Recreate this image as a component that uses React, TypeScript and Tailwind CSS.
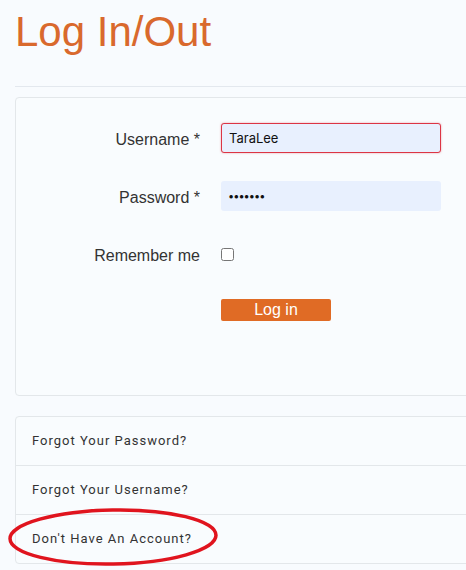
import React from "react";

const links = ["Forgot Your Password?", "Forgot Your Username?", "Don't Have An Account?"];

export default function App() {
  return (
    <div className="relative h-[570px] w-[466px] overflow-hidden bg-[#f8fbfe] font-['Liberation_Sans',Arial,sans-serif]">
      <div className="pl-[15px]">
        <h1 className="pt-[8px] text-[42px] leading-[48px] text-[#d9692d]">Log In/Out</h1>
        <div className="mt-[30px] border-t border-[#e3e8ee]" />

        <div className="mt-[10px] h-[299px] w-[470px] rounded-tl-[4px] rounded-bl-[4px] border border-[#e3e7ea] bg-[#f9fcfe]">
          <div className="flex items-center pt-[25px]">
            <label className="w-[185px] pr-[1px] pt-[4px] text-right text-[16px] text-[#333]">Username *</label>
            <input
              defaultValue="TaraLee"
              className="ml-[20px] h-[30px] w-[220px] rounded-[3px] border border-[#dc3545] bg-[#e8f0fe] px-[7px] font-['Inter',sans-serif] text-[13px] text-[#111] shadow-[0_0_2px_rgba(220,53,69,0.5)] outline-none"
            />
          </div>
          <div className="mt-[28px] flex items-center">
            <label className="w-[185px] pr-[1px] pt-[4px] text-right text-[16px] text-[#333]">Password *</label>
            <input
              type="password"
              defaultValue="abcdefg"
              className="ml-[20px] h-[30px] w-[220px] rounded-[3px] bg-[#e8f0fe] px-[7px] font-['Inter',sans-serif] text-[11px] tracking-[-1px] text-[#111] outline-none"
            />
          </div>
          <div className="mt-[29px] flex items-center">
            <label className="w-[185px] pr-[1px] pt-[4px] text-right text-[16px] text-[#333]">Remember me</label>
            <input type="checkbox" className="ml-[20px] h-[13px] w-[13px]" />
          </div>
          <div className="mt-[31px] flex">
            <button className="ml-[205px] h-[22px] w-[110px] rounded-[2px] bg-[#e06b25] text-[16px] leading-[22px] text-white">
              Log in
            </button>
          </div>
        </div>

        <div className="mt-[20px] w-[470px] rounded-l-[4px] border border-[#e3e7ea] bg-[#f9fcfe] font-['Roboto',sans-serif]">
          {links.map((l, i) => (
            <div
              key={l}
              className={
                "flex items-center pl-[16px] text-[13px] tracking-[1px] text-[#333] " +
                (i > 0 ? "h-[49px] border-t border-[#e3e7ea]" : "h-[48px]")
              }
            >
              {l}
            </div>
          ))}
        </div>
      </div>

      <svg className="absolute left-0 top-[504px]" width="226" height="66" viewBox="0 0 226 66">
        <ellipse cx="113" cy="33" rx="103" ry="27" fill="none" stroke="#e0141e" strokeWidth="3.5" transform="rotate(-1 113 33)" />
      </svg>
    </div>
  );
}
